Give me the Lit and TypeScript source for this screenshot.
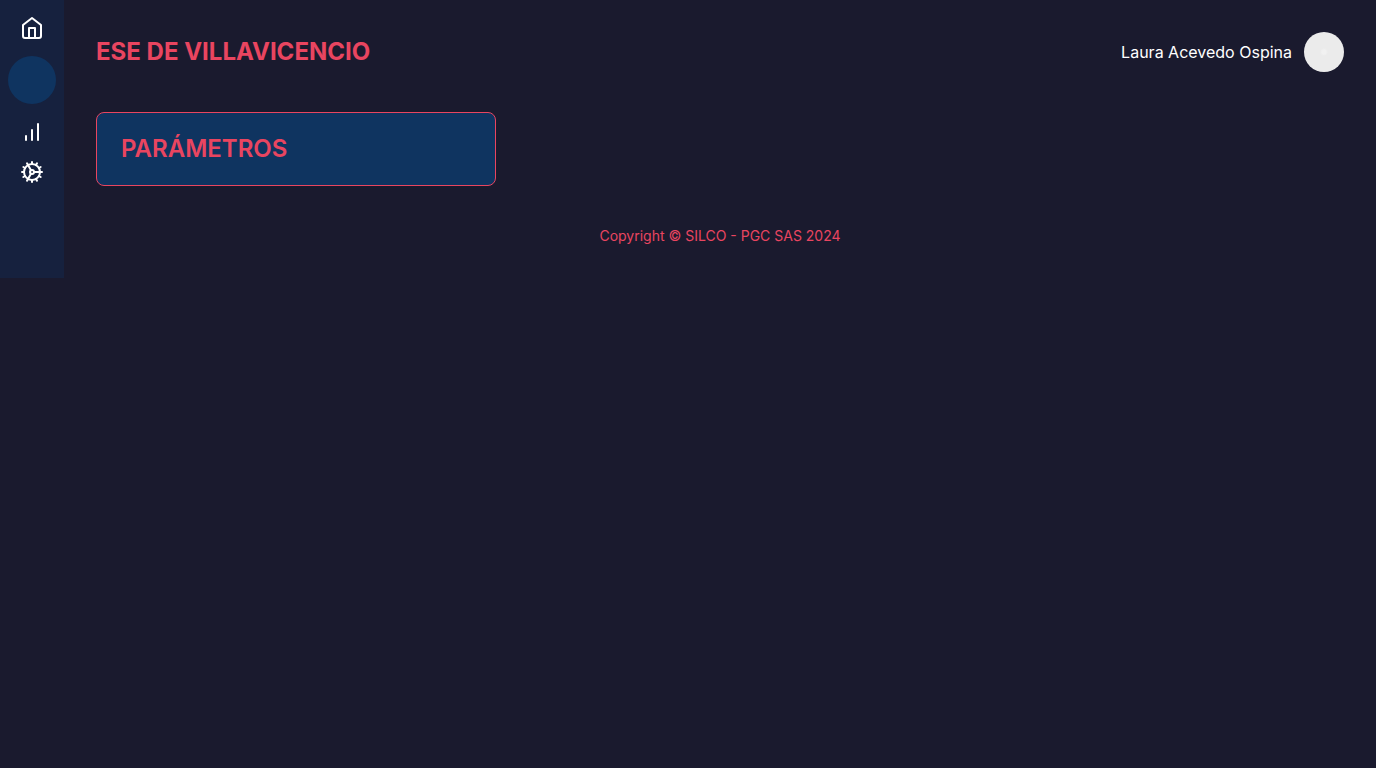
import { LitElement, html, css } from "lit";
import { customElement } from "lit/decorators.js";

@customElement("app-root")
export class AppRoot extends LitElement {
  static styles = css`
    :host {
      display: block;
      box-sizing: border-box;
      min-height: 100vh;
      background: #1a1a2e;
      color: #ffffff;
      font-family: Inter, "Liberation Sans", sans-serif;
      font-size: 16px;
      line-height: 24px;
    }
    .layout {
      display: flex;
    }
    .sidebar {
      box-sizing: border-box;
      width: 64px;
      flex: none;
      display: flex;
      flex-direction: column;
      align-items: center;
      gap: 16px;
      padding: 16px 8px;
      background: #16213e;
    }
    .link {
      display: block;
      color: inherit;
      line-height: 0;
    }
    .current {
      width: 48px;
      height: 48px;
      border-radius: 50%;
      background: #0f3460;
    }
    .icon {
      display: block;
      width: 24px;
      height: 24px;
      fill: none;
      stroke: currentColor;
      stroke-width: 2;
      stroke-linecap: round;
      stroke-linejoin: round;
    }
    .content {
      flex: 1;
      min-width: 0;
      display: flex;
      flex-direction: column;
      gap: 40px;
      padding: 32px;
    }
    .header {
      display: flex;
      align-items: center;
      justify-content: space-between;
      gap: 24px;
    }
    .title,
    .card-title {
      margin: 0;
      font-size: 24px;
      color: #e94560;
    }
    .title {
      font-weight: 700;
      line-height: 32px;
    }
    .user {
      display: flex;
      align-items: center;
      gap: 12px;
    }
    .avatar {
      width: 40px;
      height: 40px;
      flex: none;
      border-radius: 50%;
      background: radial-gradient(circle, #f1f1f1 0 2px, #ebebeb 4px);
    }
    .cards {
      display: grid;
      grid-template-columns: repeat(auto-fill, minmax(320px, 1fr));
      gap: 24px;
    }
    .card {
      padding: 24px;
      border: 1px solid #e94560;
      border-radius: 8px;
      background: #0f3460;
    }
    .card-title {
      font-weight: 600;
      line-height: 24px;
    }
    .footer {
      text-align: center;
      font-size: 14px;
      line-height: 20px;
      color: #e94560;
    }
  `;

  render() {
    return html`
      <div class="layout">
        <nav class="sidebar">
          <a class="link" href="#inicio" aria-label="Inicio">
            <svg class="icon" viewBox="0 0 24 24">
              <path d="m3 9 9-7 9 7v11a2 2 0 0 1-2 2H5a2 2 0 0 1-2-2z" />
              <polyline points="9 22 9 12 15 12 15 22" />
            </svg>
          </a>
          <a class="link current" href="#parametros" aria-label="Parámetros"></a>
          <a class="link" href="#reportes" aria-label="Reportes">
            <svg class="icon" viewBox="0 0 24 24">
              <line x1="12" x2="12" y1="20" y2="10" />
              <line x1="18" x2="18" y1="20" y2="4" />
              <line x1="6" x2="6" y1="20" y2="16" />
            </svg>
          </a>
          <a class="link" href="#ajustes" aria-label="Ajustes">
            <svg class="icon" viewBox="0 0 24 24">
              <path d="M12 20a8 8 0 1 0 0-16 8 8 0 0 0 0 16Z" />
              <path d="M12 14a2 2 0 1 0 0-4 2 2 0 0 0 0 4Z" />
              <path d="M12 2v2" />
              <path d="M12 22v-2" />
              <path d="m17 20.66-1-1.73" />
              <path d="M11 10.27 7 3.34" />
              <path d="m20.66 17-1.73-1" />
              <path d="m3.34 7 1.73 1" />
              <path d="M14 12h8" />
              <path d="M2 12h2" />
              <path d="m20.66 7-1.73 1" />
              <path d="m3.34 17 1.73-1" />
              <path d="m17 3.34-1 1.73" />
              <path d="m11 13.73-4 6.93" />
            </svg>
          </a>
        </nav>
        <div class="content">
          <header class="header">
            <h1 class="title">ESE DE VILLAVICENCIO</h1>
            <div class="user">
              <span>Laura Acevedo Ospina</span>
              <div class="avatar"></div>
            </div>
          </header>
          <main class="cards">
            <section class="card">
              <h2 class="card-title">PARÁMETROS</h2>
            </section>
          </main>
          <footer class="footer">Copyright © SILCO - PGC SAS 2024</footer>
        </div>
      </div>
    `;
  }
}
